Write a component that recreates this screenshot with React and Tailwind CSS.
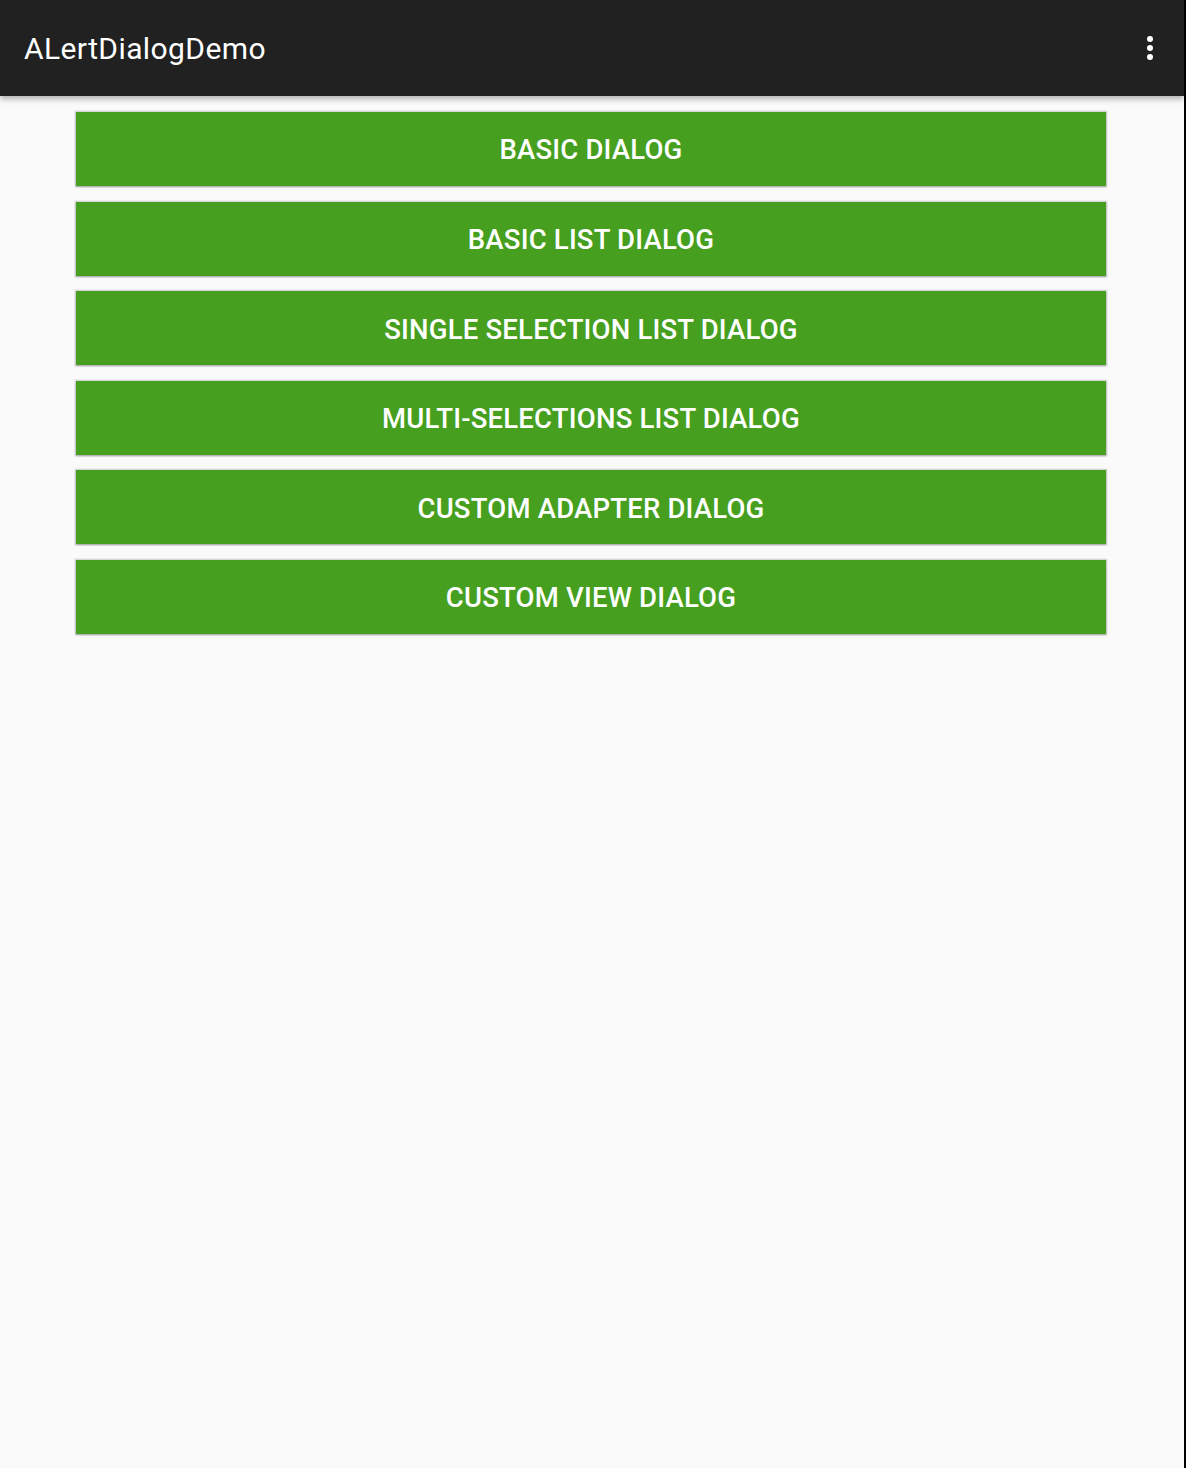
import React from 'react';

const buttons = [
  'BASIC DIALOG',
  'BASIC LIST DIALOG',
  'SINGLE SELECTION LIST DIALOG',
  'MULTI-SELECTIONS LIST DIALOG',
  'CUSTOM ADAPTER DIALOG',
  'CUSTOM VIEW DIALOG',
];

const App = () => {
  return (
    <div className="flex min-h-[1468px] w-[1186px] bg-black font-['Roboto',sans-serif]">
      <div className="flex w-[1184px] flex-col bg-[#fafafa]">
        {/* Toolbar */}
        <div className="relative z-10 flex h-[96px] items-center justify-between bg-[#212121] pl-6 pr-[31px] shadow-[0_3px_6px_rgba(0,0,0,0.3)]">
          <h1 className="text-[30px] tracking-[0.4px] text-white">ALertDialogDemo</h1>
          <div className="flex flex-col items-center gap-[3px]">
            <span className="h-[6px] w-[6px] rounded-full bg-white" />
            <span className="h-[6px] w-[6px] rounded-full bg-white" />
            <span className="h-[6px] w-[6px] rounded-full bg-white" />
          </div>
        </div>

        {/* Buttons */}
        <div className="flex flex-col gap-[15.6px] pl-[76px] pr-[78px] pt-4">
          {buttons.map(label => (
            <button
              key={label}
              className="flex h-[74px] items-center justify-center bg-[#469f1f] pt-[2px] text-[27.5px] font-medium tracking-[0.2px] text-white shadow-[0_1px_2px_rgba(0,0,0,0.25),0_0_0_1.5px_rgba(0,0,0,0.12)]"
            >
              {label}
            </button>
          ))}
        </div>
      </div>
    </div>
  );
};

export default App;
